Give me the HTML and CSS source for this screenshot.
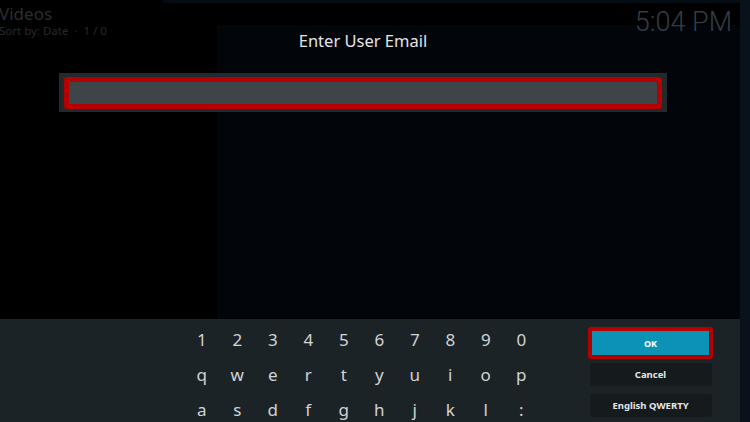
FILE: index.html
```html
<!DOCTYPE html>
<html lang="en">
<head>
  <meta charset="UTF-8">
  <title>Videos - Enter User Email</title>
  <link rel="stylesheet" href="styles.css">
</head>
<body>

  <div class="screen">
    <!-- library window behind the keyboard dialog -->
    <div class="window">
      <header class="window-head">
        <div class="crumbs">
          <div class="crumb-title">Videos</div>
          <div class="crumb-sub">Sort by: Date &nbsp;·&nbsp; 1 / 0</div>
        </div>
        <div class="clock">5:04 PM</div>
      </header>
    </div>

    <!-- on-screen keyboard dialog -->
    <div class="dialog">
      <h1 class="dialog-title">Enter User Email</h1>

      <div class="edit-panel">
        <div class="edit-field"></div>
      </div>

      <div class="keyboard">
        <div class="keys">
          <span>1</span><span>2</span><span>3</span><span>4</span><span>5</span>
          <span>6</span><span>7</span><span>8</span><span>9</span><span>0</span>
          <span>q</span><span>w</span><span>e</span><span>r</span><span>t</span>
          <span>y</span><span>u</span><span>i</span><span>o</span><span>p</span>
          <span>a</span><span>s</span><span>d</span><span>f</span><span>g</span>
          <span>h</span><span>j</span><span>k</span><span>l</span><span>:</span>
        </div>

        <div class="key-actions">
          <button class="btn btn-ok">OK</button>
          <button class="btn btn-cancel">Cancel</button>
          <button class="btn">English QWERTY</button>
        </div>
      </div>
    </div>
  </div>

</body>
</html>
```

FILE: styles.css
```css
html, body {
  margin: 0;
  padding: 0;
}

body {
  font-family: "Noto Sans", "Open Sans", sans-serif;
  width: 750px;
  height: 422px;
  overflow: hidden;
  background:
    linear-gradient(to right, transparent 740px, #09111a 740px),
    linear-gradient(#050b12, #050b12) 163px 0 / 100% 3px no-repeat,
    linear-gradient(#02050a, #02050a) 217px 25px / 523px 100% no-repeat,
    #000;
}

.screen {
  position: relative;
  width: 750px;
  height: 422px;
}

.window {
  width: 740px;
}

.window-head {
  display: flex;
  justify-content: space-between;
  padding-right: 8px;
}

.crumbs {
  margin-left: -1px;
  padding-top: 4px;
}

.crumb-title {
  font-size: 17px;
  line-height: 19px;
  color: #2c2d2f;
}

.crumb-sub {
  margin-top: 1px;
  font-size: 11.5px;
  line-height: 13px;
  color: #28292b;
}

.clock {
  font-family: Roboto, "Noto Sans", sans-serif;
  font-weight: 300;
  font-size: 27px;
  line-height: 32px;
  margin-top: 6px;
  color: #323d46;
}

/* dialog sits over the window */
.dialog {
  position: absolute;
  top: 0;
  left: 0;
  width: 740px;
  height: 422px;
  display: flex;
  flex-direction: column;
}

.dialog-title {
  margin: 0;
  padding: 28px 14px 0 0;
  font-size: 16.5px;
  font-weight: normal;
  line-height: 25px;
  text-align: center;
  color: #e4e4e4;
}

.edit-panel {
  margin: 20px 0 0 59px;
  width: 608px;
  padding: 4px 5px 3px 5px;
  box-sizing: border-box;
  background: #222a2d;
}

.edit-field {
  height: 32px;
  box-sizing: border-box;
  border: 5px solid #b40000;
  border-radius: 3px;
  background: #3d4548;
}

.keyboard {
  margin-top: auto;
  height: 103px;
  background: #1c2326;
  display: flex;
  overflow: hidden;
}

.keys {
  margin-left: 184px;
  padding-top: 3px;
  display: grid;
  grid-template-columns: repeat(10, 35.5px);
  grid-auto-rows: 35px;
  font-size: 17px;
  line-height: 35px;
  text-align: center;
  color: #d2d4d5;
}

.key-actions {
  margin-left: 49px;
  padding-top: 8px;
  width: 125px;
  display: flex;
  flex-direction: column;
  align-items: center;
}

.btn {
  width: 122px;
  height: 23px;
  padding: 0;
  border: none;
  border-radius: 2px;
  background: #151b1d;
  color: #e6e6e6;
  font-family: "Noto Sans", "Open Sans", sans-serif;
  font-weight: bold;
  font-size: 9.5px;
}

.btn-ok {
  width: 125px;
  height: 32px;
  box-sizing: border-box;
  border: 4px solid #b40000;
  border-radius: 3px;
  background: #0b92b5;
  color: #fff;
  font-size: 9px;
  margin-bottom: 4px;
}

.btn-cancel {
  margin-bottom: 8px;
}
```
